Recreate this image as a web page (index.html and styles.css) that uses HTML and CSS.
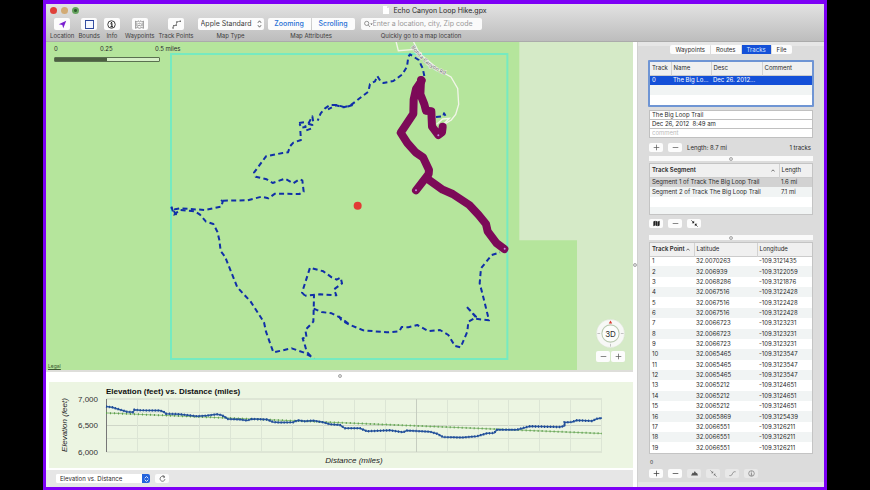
FILE: index.html
```
<!DOCTYPE html>
<html lang="en">
<head>
<meta charset="utf-8">
<title>Echo Canyon Loop Hike.gpx</title>
<link rel="stylesheet" href="styles.css">
</head>
<body>
<div class="window">
  <header class="titlebar">
    <div class="title-row">
      <div class="lights"><i class="light red"></i><i class="light amber"></i><i class="light green"></i></div>
      <h1 class="title"><svg class="doc" viewBox="0 0 12 16"><path d="M0 0h8l4 4v12H0z" fill="#fff"/><path d="M8 0v4h4" fill="#ddd"/></svg>Echo Canyon Loop Hike.gpx</h1>
    </div>
    <div class="tools">
      <div class="tool"><button class="tbtn" aria-labelledby="l1"><svg viewBox="0 0 24 24"><path d="M22 2 14 22 11.500 13 2 11z" fill="#7a1fd0"/></svg></button><span id="l1">Location</span></div>
      <div class="tool"><button class="tbtn" aria-labelledby="l2"><svg viewBox="0 0 24 24"><path d="M1 1h22v22H1z" fill="#f4f7ff" stroke="#2b469c" stroke-width="3"/></svg></button><span id="l2">Bounds</span></div>
      <div class="tool info"><button class="tbtn" aria-labelledby="l3"><svg viewBox="0 0 24 24"><circle cx="12" cy="12" r="10" fill="none" stroke="#333" stroke-width="2.500"/><path d="M9 10h4v8M9 18h7M12 5v3" fill="none" stroke="#222" stroke-width="3"/></svg></button><span id="l3">Info</span></div>
      <div class="tool"><button class="tbtn" aria-labelledby="l4"><svg viewBox="0 0 24 24"><path d="M1 3l4 2 3-3 4 3 4-3 3 3 4-2v19l-5-2-6 2-6-2-5 2zM5 7v10M19 7v10M6 17l5-3 3 2 4-3M9 8l3 3 3-3" fill="none" stroke="#777" stroke-width="2"/></svg></button><span id="l4">Waypoints</span></div>
      <div class="tool"><button class="tbtn" aria-labelledby="l5"><svg viewBox="0 0 24 24"><path d="M2 22l2-7 7-1 2-9 10-2" fill="none" stroke="#777" stroke-width="2"/><g fill="#555"><circle cx="3" cy="21" r="2"/><circle cx="5" cy="15" r="2"/><circle cx="11" cy="14" r="2"/><circle cx="13" cy="5" r="2"/><circle cx="22" cy="3" r="2"/></g></svg></button><span id="l5">Track Points</span></div>
      <div class="tool"><div class="pop"><select id="maptype"><option>Apple Standard</option></select><svg viewBox="0 0 12 20"><path d="M2 7l4-5 4 5M2 13l4 5 4-5" fill="none" stroke="#444" stroke-width="2"/></svg></div><label for="maptype">Map Type</label></div>
      <div class="tool attrs"><div class="seg"><button>Zooming</button><button>Scrolling</button></div><span>Map Attributes</span></div>
      <div class="tool find"><div class="search"><svg viewBox="0 0 30 24"><circle cx="9" cy="10" r="7" fill="none" stroke="#555" stroke-width="2"/><path d="M14 15l6 7" stroke="#555" stroke-width="2"/><path d="M21 10h8l-4 5z" fill="#555"/></svg><input id="find" type="text" placeholder="Enter a location, city, Zip code"></div><label for="find">Quickly go to a map location</label></div>
    </div>
  </header>

  <div class="content">
    <main class="left">
      <section class="map">
        <svg class="mapart" viewBox="0 0 1761 984" role="img" aria-label="Trail map">
          <path d="M0 0h1761v984H0z" fill="#b5e59c"/>
          <path d="M1420 0h341v984h-168V595h-173z" fill="#d5eac7"/>
          <path d="M375 36h1009v915H375z" fill="none" stroke="#76eac0" stroke-width="6"/>
          <g transform="translate(882 -6)">
            <g fill="none" stroke="#f2f5e9" stroke-width="4">
              <path d="M167 0l8 32 50-4 20 13M218 0l20 40 63 53 32 18 20 34 3 48-9 30-13 17-34 20"/>
              <path d="M290 253l18-16 20-2-22 22"/>
            </g>
            <path id="road" d="M213 22L234 48 266 78 300 98 345 118" fill="none"/>
            <text class="roadname"><textPath href="#road">Bonita Canyon Rd</textPath></text>
          </g>
          <g class="trail">
            <path transform="translate(342 9)" d="M578 180L555 187 530 180 510 180 495 190 482 205 473 227M445 236L457 214 460 232M439 256L455 250 457 240 443 236M417 234L432 232 437 246 423 248 419 236M421 258L423 285 400 293 390 304 384 322 368 324 318 334 282 383 287 395 320 403 338 414 375 401 400 415 418 403 427 406 431 440 418 447 345 446 325 460 305 455 262 466 190 467 182 463 188 470 184 485 135 495 60 490 45 493 48 508 34 487"/>
            <path transform="translate(882 -6)" d="M253 108L248 85 236 60 210 43 205 50 201 80 187 103 160 123 130 129 122 124 112 108 105 124 90 132 85 155 65 170 50 182 30 197 10 202 -12 196 -36 208"/>
            <path transform="translate(882 -6)" d="M288 231l22-2 2-9 8 13"/>
            <path transform="translate(342 444)" d="M34 50L42 74 60 60 105 64 120 74 138 95 160 102 172 125 178 150 182 183 195 200 232 292 272 335 312 397 318 425 340 487 395 475 430 487 463 505M452 498L440 485 436 470 428 445 440 443 436 420 460 395 461 362 462 315M435 317L426 308 450 233 490 244 515 262 530 269 542 263 546 280 522 298 529 316 480 313 435 317M461 356L485 366 515 370 545 385 570 405"/>
            <path transform="translate(882 594)" d="M-4 228L4 240 30 255 70 271 140 277 178 274 185 261 205 262 232 255 265 273 300 270 325 285 345 318 362 322 382 275 385 245 408 232 378 198 408 230 404 236 447 241 437 200 427 160 419 130 423 85 455 45 480 37"/>
          </g>
          <g transform="translate(882 -6)" class="track">
            <path d="M245 122l-17 25-7 32-1 42-38 57 20 31 25 28 22 15 18 38-1 12-38 49"/>
            <path d="M263 417l45 32 30 13 50 33 28 30 22 27 5 22 27 36 23 17"/>
            <path d="M243 120l-2 43 12 30 5 19 16 2 2 46 19 25 11-8 2-17"/>
          </g>
          <circle cx="935" cy="491" r="12" fill="#e23b35"/>
          <g fill="#c78be6"><circle cx="1376" cy="620" r="3"/><circle cx="1110" cy="445" r="3"/><circle cx="1177" cy="280" r="3"/></g>
        </svg>
        <div class="scale">
          <div class="scale-labels"><span>0</span><span>0.25</span><span>0.5 miles</span></div>
          <div class="scale-bar"></div>
        </div>
        <a class="legal" href="#legal">Legal</a>
        <div class="nav">
          <button class="compass" aria-label="3D"><svg viewBox="0 0 84 84"><circle cx="42" cy="42" r="41" fill="#f7f8f6" stroke="#ccd8c5" stroke-width="1"/><circle cx="42" cy="42" r="25" fill="#fcfdfb" stroke="#b9c9b0" stroke-width="3"/><path d="M42 4l5 9H37z" fill="#d93a30"/><path d="M42 72v8M4 42h8M72 42h8" stroke="#aaa" stroke-width="2"/></svg><span>3D</span></button>
          <div class="zoom"><button aria-label="Zoom out"><svg viewBox="0 0 20 20"><path d="M2 10h16" stroke="#555" stroke-width="2"/></svg></button><button aria-label="Zoom in"><svg viewBox="0 0 20 20"><path d="M2 10h16M10 2v16" stroke="#555" stroke-width="2"/></svg></button></div>
        </div>
      </section>
      <div class="hsplit"><i></i></div>
      <section class="chart">
        <svg viewBox="46 382 587 86" role="img" aria-label="Elevation chart">
          <path d="M106.500 399H602M106.500 425.500H602M106.500 452H602" stroke="#cfd6c8"/>
          <path d="M106.500 412.500H602M106.500 438.500H602M137.500 399v53M168.500 399v53M199.500 399v53M230.500 399v53M261.500 399v53M292.500 399v53M323.500 399v53M354.500 399v53M385.500 399v53M447.500 399v53M478.500 399v53M508.500 399v53M539.500 399v53M570.500 399v53M601.500 399v53" stroke="#dce5d5"/>
          <path d="M416.500 399v53" stroke="#c6cdc0"/>
          <path d="M106.500 399v53" stroke="#777"/>
          <path d="M106 413L602 433.500" stroke="#8fc07e" stroke-width="1"/>
          <path d="M106 413L602 433.500" stroke="#5c9c4d" stroke-width="2" stroke-dasharray="1 3"/>
          <path class="elev" d="M106 406.500L112 407.300 121 410 127 411.700 133 412.300 134.500 409.700 140 410.300 160 410.600 164 412 166 413.700 180 414.300 197 416.300 207 415.600 217 414.300 222 415.300 228 419 240 419.500 247 420.600 252 419 267 419.600 273 422 280 422.600 293 422.300 298 420.300 305 421.300 313 420.600 323 422.300 330 424.300 340 425 345 428.300 360 428.300 367 431.300 390 430.300 403 432.300 407 430.600 430 431.700 437 433.700 443 437 462 437.600 477 436.300 487 433.300 494 433 497 429.700 517 429.700 530 426.300 560 427 564.500 426V422.500L572 422 577 420.300 592 421 597 418.700 602 418"/>
          <path class="elevdots" d="M106 406.500L112 407.300 121 410 127 411.700 133 412.300 134.500 409.700 140 410.300 160 410.600 164 412 166 413.700 180 414.300 197 416.300 207 415.600 217 414.300 222 415.300 228 419 240 419.500 247 420.600 252 419 267 419.600 273 422 280 422.600 293 422.300 298 420.300 305 421.300 313 420.600 323 422.300 330 424.300 340 425 345 428.300 360 428.300 367 431.300 390 430.300 403 432.300 407 430.600 430 431.700 437 433.700 443 437 462 437.600 477 436.300 487 433.300 494 433 497 429.700 517 429.700 530 426.300 560 427 564.500 426V422.500L572 422 577 420.300 592 421 597 418.700 602 418"/>
          <text class="ctitle" x="106" y="394">Elevation (feet) vs. Distance (miles)</text>
          <g class="ticks"><text x="98" y="402">7,000</text><text x="98" y="428">6,500</text><text x="98" y="455">6,000</text></g>
          <text class="axis" x="354" y="463">Distance (miles)</text>
          <text class="axis" transform="translate(67 425) rotate(-90)">Elevation (feet)</text>
        </svg>
      </section>
      <footer class="bottom">
        <div class="pop2"><select aria-label="Chart"><option>Elevation vs. Distance</option></select><span class="cap"><svg viewBox="0 0 20 20"><path d="M5 8l5-5 5 5M5 12l5 5 5-5" fill="none" stroke="#fff" stroke-width="2.500"/></svg></span></div>
        <button class="sq refresh" aria-label="Refresh"><svg viewBox="0 0 20 20"><path d="M16 7a7 7 0 1 0 1 5M10 1l6 3-3 5" fill="none" stroke="#444" stroke-width="2"/></svg></button>
      </footer>
    </main>
    <div class="vsplit"><i></i></div>

    <aside class="side">
      <nav class="tabs"><button>Waypoints</button><button>Routes</button><button class="on">Tracks</button><button>File</button></nav>
      <div class="box focus">
        <table class="t1">
          <thead><tr><th>Track</th><th>Name</th><th>Desc</th><th>Comment</th></tr></thead>
          <tbody><tr class="sel"><td>0</td><td>The Big Lo...</td><td>Dec 26. 2012...</td><td></td></tr>
          <tr><td colspan="4"></td></tr><tr><td colspan="4"></td></tr></tbody>
        </table>
      </div>
      <div class="fields">
        <input type="text" aria-label="Name" value="The Big Loop Trail">
        <input type="text" aria-label="Date" value="Dec 26, 2012  8:49 am">
        <input type="text" aria-label="Comment" placeholder="comment">
      </div>
      <div class="row acts"><button class="sq" aria-label="Add"><svg viewBox="0 0 20 20"><path d="M2 10h16M10 2v16" stroke="#555" stroke-width="2"/></svg></button><button class="sq" aria-label="Remove"><svg viewBox="0 0 20 20"><path d="M2 10h16" stroke="#555" stroke-width="2"/></svg></button><span>Length: 8.7 mi</span><span class="end">1 tracks</span></div>
      <div class="bar"><i></i></div>
      <div class="box">
        <table class="t2">
          <thead><tr><th class="sort"><span>Track Segment</span><svg viewBox="0 0 12 8"><path d="M1 7l5-5 5 5" fill="none" stroke="#333" stroke-width="2"/></svg></th><th>Length</th></tr></thead>
          <tbody><tr class="cur"><td>Segment 1 of Track The Big Loop Trail</td><td>1.6 mi</td></tr>
          <tr><td>Segment 2 of Track The Big Loop Trail</td><td>7.1 mi</td></tr>
          <tr><td colspan="2"></td></tr><tr><td colspan="2"></td></tr></tbody>
        </table>
      </div>
      <div class="row acts2"><button class="sq" aria-label="Map"><svg viewBox="0 0 20 20"><path d="M1 4l5-2v14l-5 2zM7 2l6 2v14l-6-2zM14 4l5-2v14l-5 2z" fill="#222"/></svg></button><button class="sq" aria-label="Remove"><svg viewBox="0 0 20 20"><path d="M2 10h16" stroke="#555" stroke-width="2"/></svg></button><button class="sq" aria-label="Split"><svg viewBox="0 0 20 20"><path d="M1 1l7 7M19 19l-7-7" stroke="#222" stroke-width="2"/><path d="M9 2v7H2zM11 18v-7h7z" fill="#222"/></svg></button></div>
      <div class="bar"><i></i></div>
      <div class="box grow">
        <table class="t3">
          <thead><tr><th class="sort"><span>Track Point</span><svg viewBox="0 0 12 8"><path d="M1 7l5-5 5 5" fill="none" stroke="#333" stroke-width="2"/></svg></th><th>Latitude</th><th>Longitude</th></tr></thead>
          <tbody>
          <tr><td>1</td><td>32.0070263</td><td>-109.3121435</td></tr>
          <tr><td>2</td><td>32.006939</td><td>-109.3122059</td></tr>
          <tr><td>3</td><td>32.0068286</td><td>-109.3121876</td></tr>
          <tr><td>4</td><td>32.0067516</td><td>-109.3122428</td></tr>
          <tr><td>5</td><td>32.0067516</td><td>-109.3122428</td></tr>
          <tr><td>6</td><td>32.0067516</td><td>-109.3122428</td></tr>
          <tr><td>7</td><td>32.0066723</td><td>-109.3123231</td></tr>
          <tr><td>8</td><td>32.0066723</td><td>-109.3123231</td></tr>
          <tr><td>9</td><td>32.0066723</td><td>-109.3123231</td></tr>
          <tr><td>10</td><td>32.0065465</td><td>-109.3123547</td></tr>
          <tr><td>11</td><td>32.0065465</td><td>-109.3123547</td></tr>
          <tr><td>12</td><td>32.0065465</td><td>-109.3123547</td></tr>
          <tr><td>13</td><td>32.0065212</td><td>-109.3124651</td></tr>
          <tr><td>14</td><td>32.0065212</td><td>-109.3124651</td></tr>
          <tr><td>15</td><td>32.0065212</td><td>-109.3124651</td></tr>
          <tr><td>16</td><td>32.0065869</td><td>-109.3125439</td></tr>
          <tr><td>17</td><td>32.0066551</td><td>-109.3126211</td></tr>
          <tr><td>18</td><td>32.0066551</td><td>-109.3126211</td></tr>
          <tr><td>19</td><td>32.0066551</td><td>-109.3126211</td></tr>
          </tbody>
        </table>
      </div>
      <div class="count">0</div>
      <div class="row acts3"><button class="sq" aria-label="Add"><svg viewBox="0 0 20 20"><path d="M2 10h16M10 2v16" stroke="#333" stroke-width="2"/></svg></button><button class="sq" aria-label="Remove"><svg viewBox="0 0 20 20"><path d="M2 10h16" stroke="#333" stroke-width="2"/></svg></button><button class="sq dim" aria-label="Elevation" disabled><svg viewBox="0 0 20 20"><path d="M0 16l5-9 2 2 4-6 4 6 2-1 3 8z" fill="#555"/></svg></button><button class="sq dim" aria-label="Split" disabled><svg viewBox="0 0 20 20"><path d="M1 1l7 7M19 19l-7-7" stroke="#777" stroke-width="2"/><path d="M9 3v6H3zM11 17v-6h6z" fill="#777"/></svg></button><button class="sq dim" aria-label="Smooth" disabled><svg viewBox="0 0 20 20"><path d="M1 16h4c5 0 4-10 10-11h4" fill="none" stroke="#777" stroke-width="2"/></svg></button><button class="sq dim" aria-label="Info" disabled><svg viewBox="0 0 20 20"><circle cx="10" cy="10" r="8" fill="none" stroke="#777" stroke-width="2"/><path d="M10 4v3M8 9h2v6M7 15h6" fill="none" stroke="#777" stroke-width="2"/></svg></button></div>
    </aside>
  </div>
</div>
</body>
</html>
```
FILE: styles.css
```
* { box-sizing: border-box; }
body { margin: 0; background: #000; font: 6px/8px Inter, "Liberation Sans", sans-serif; color: #2a2a2a; }
button, input, select { font: inherit; color: inherit; margin: 0; padding: 0; border: 0; background: #fcfcfc; appearance: none; }
svg { display: block; }

.window { margin: 0 43px; min-height: 100vh; border: solid #7d00f5; border-width: 4px 3px 3px; background: #fff; display: flex; flex-direction: column; }
.titlebar { height: 38px; flex: none; background: linear-gradient(#e2e2e2, #bdbdbd); border-bottom: 1px solid #ababab; }
.title-row { display: grid; grid-template-columns: 1fr auto 1fr; align-items: center; height: 12px; padding: 0 4px; }
.lights { display: flex; gap: 4px; }
.light { width: 7px; height: 7px; border-radius: 50%; }
.red { background: #df4039; }
.amber { background: #d2ab75; }
.green { background: radial-gradient(#2d5c2d 1px, #65a35e 2px); }
.title { margin: 0; display: flex; align-items: center; gap: 4px; font-size: 7px; line-height: 9px; font-weight: 400; }
.doc { width: 6px; height: 8px; }
.tools { display: flex; padding: 2px 4px 0; gap: 4px; white-space: nowrap; }
.tool { display: flex; flex-direction: column; align-items: center; gap: 2px; color: #3c3c3c; }
.tbtn { width: 16px; height: 12px; border-radius: 2px; display: grid; place-items: center; }
.tbtn svg { width: 9px; height: 9px; }
.info { margin: 0 1px 0 0; }
.pop { position: relative; width: 66px; height: 12px; }
.pop select { width: 100%; height: 100%; padding-left: 3px; border-radius: 2px; font-size: 7px; }
.pop svg { position: absolute; right: 2px; top: 2px; width: 5px; height: 8px; }
.seg { display: flex; width: 87px; height: 12px; gap: 1px; }
.seg button { flex: 1; font-size: 7px; font-weight: 500; color: #2870d4; }
.seg button:first-child { border-radius: 2px 0 0 2px; }
.seg button:last-child { border-radius: 0 2px 2px 0; }
.find { padding-left: 2px; }
.search { display: flex; align-items: center; width: 121px; height: 12px; padding-left: 3px; background: #fafafa; border-radius: 2px; }
.search svg { width: 9px; height: 8px; flex: none; }
.search input { flex: 1; min-width: 0; font-size: 7px; background: none; }
::placeholder { color: #999; opacity: 1; }

.content { flex: 1; display: grid; grid-template-columns: 1fr 5px 186px; }
.left { display: flex; flex-direction: column; min-width: 0; }
.map { position: relative; overflow: hidden; }
.mapart { width: 100%; height: auto; }
.roadname { font: 16px "Open Sans", sans-serif; fill: #666; stroke: #f0f0ea; stroke-width: 3px; paint-order: stroke; }
.trail { fill: none; stroke: #102fa8; stroke-width: 6; stroke-dasharray: 15 10; stroke-linejoin: round; }
.track { fill: none; stroke: #7c0a58; stroke-width: 24; stroke-linecap: round; stroke-linejoin: round; }
.scale { position: absolute; left: 8px; top: 3px; width: 130px; }
.scale-labels { display: grid; grid-template-columns: 46px 55px 1fr; }
.scale-bar { margin-top: 4px; width: 106px; height: 5px; border: 1px solid #5a7050; border-radius: 1px; background: linear-gradient(90deg, #4c6041 50%, #d5efc6 50%); }
.legal { position: absolute; left: 2px; bottom: 0; font-size: 5px; color: #3c5a32; }
.nav { position: absolute; right: 8px; bottom: 8px; display: flex; flex-direction: column; align-items: center; gap: 3px; }
.compass { position: relative; width: 29px; height: 29px; background: none; }
.compass span { position: absolute; inset: 0; display: grid; place-items: center; font-size: 8px; }
.zoom { display: flex; gap: 1px; }
.zoom button { width: 14px; height: 11px; border-radius: 2px; display: grid; place-items: center; }
.zoom svg { width: 7px; height: 7px; }
.hsplit { height: 12px; border-top: 2px solid #dededa; display: grid; justify-content: center; padding-top: 2px; }
.hsplit i, .bar i, .vsplit i { width: 4px; height: 4px; border-radius: 50%; background: #ddd; border: 1px solid #aaa; }
.chart { background: #ecf5e2; margin-left: 3px; }
.chart svg { width: calc(100% + 3px); margin-left: -3px; height: auto; }
.elev { fill: none; stroke: #2a59a0; stroke-width: 1.5; }
.elevdots { fill: none; stroke: #1f4a96; stroke-width: 2.5; stroke-dasharray: 1 2; }
.ctitle { font: bold 8px "Liberation Sans", sans-serif; fill: #111; }
.ticks { font: 8px "Liberation Sans", sans-serif; fill: #333; text-anchor: end; }
.axis { font: italic 8px "Liberation Sans", sans-serif; fill: #222; text-anchor: middle; }
.bottom { flex: 1; border-top: 2px solid #fff; background: #e6e6e6; display: flex; align-items: center; gap: 5px; padding-left: 10px; }
.pop2 { display: flex; width: 94px; height: 9px; background: #fff; border-radius: 2px; overflow: hidden; }
.pop2 select { flex: 1; min-width: 0; padding-left: 4px; background: #fff; }
.cap { width: 8px; background: #2463dc; display: grid; place-items: center; }
.cap svg { width: 7px; height: 8px; }
.vsplit { background: #fff; border-right: 1px solid #d0d0d0; display: grid; place-content: center; }

.side { background: #dcdcdc; border-top: 4px solid #e6e6e6; border-bottom: 5px solid #e6e6e6; padding: 0 11px 4px; display: flex; flex-direction: column; min-width: 0; }
.tabs { display: flex; justify-content: center; height: 9px; margin-top: -1px; gap: 1px; }
.tabs button { padding: 0 5px; }
.tabs button:first-child { border-radius: 2px 0 0 2px; }
.tabs button:last-child { border-radius: 0 2px 2px 0; }
.tabs .on { background: #1450d8; color: #d8e6ff; }
.box { border: 1px solid #c4c4c4; background: #fff; }
.focus { margin: 6px -1px 0; border: 2px solid #6f95d4; border-radius: 1px; }
table { width: 100%; border-collapse: collapse; table-layout: fixed; white-space: nowrap; }
th, td { padding: 0 0 0 2px; text-align: left; font-weight: 400; overflow: hidden; }
thead tr { background: #f0f0f0; height: 13px; border-bottom: 1px solid #ccc; }
th + th { border-left: 1px solid #d2d2d2; }
tbody tr { height: 10px; }
tbody tr:nth-child(even) { background: #f1f4f4; }
tbody tr.sel { background: #1450d8; color: #fff; }
tbody tr.cur { background: #d2d2d2; }
.sort { font-weight: 600; }
.sort span { display: inline-block; }
.sort svg { display: inline-block; width: 4px; height: 3px; margin-left: 1px; vertical-align: middle; }
.t1 th:nth-child(1) { width: 21px; }
.t1 th:nth-child(2) { width: 40px; }
.t1 th:nth-child(3) { width: 51px; }
.t2 th:nth-child(2) { width: 33px; }
.t2 .sort svg { float: right; margin: 3px 4px 0 0; }
.t2 tr:last-child:not(:first-child) { height: 7px; }
.t3 th:nth-child(1) { width: 44px; }
.t3 th:nth-child(2) { width: 63px; }
.fields { margin-top: 3px; display: grid; border: 1px solid #c0c0c0; background: #c0c0c0; gap: 1px; }
.fields input { height: 8px; width: 100%; padding-left: 2px; background: #fff; }
.fields ::placeholder { color: #bbb; }
.row { display: flex; align-items: center; gap: 5px; }
.sq { width: 14px; height: 9px; border-radius: 2px; display: grid; place-items: center; flex: none; }
.sq svg { width: 7px; height: 7px; }
.dim { background: #e8e8e8; }
.end { margin-left: auto; padding-right: 2px; }
.acts { margin: 5px 0 4px; }
.acts2 { margin: 4px 0 7px; }
.bar { height: 5px; margin-bottom: 2px; background: #fafafa; display: grid; place-content: center; }
.grow { flex: 1; }
.t3 { height: 100%; }
.count { margin: 4px 0 3px; font-size: 5px; padding-left: 1px; }
```
